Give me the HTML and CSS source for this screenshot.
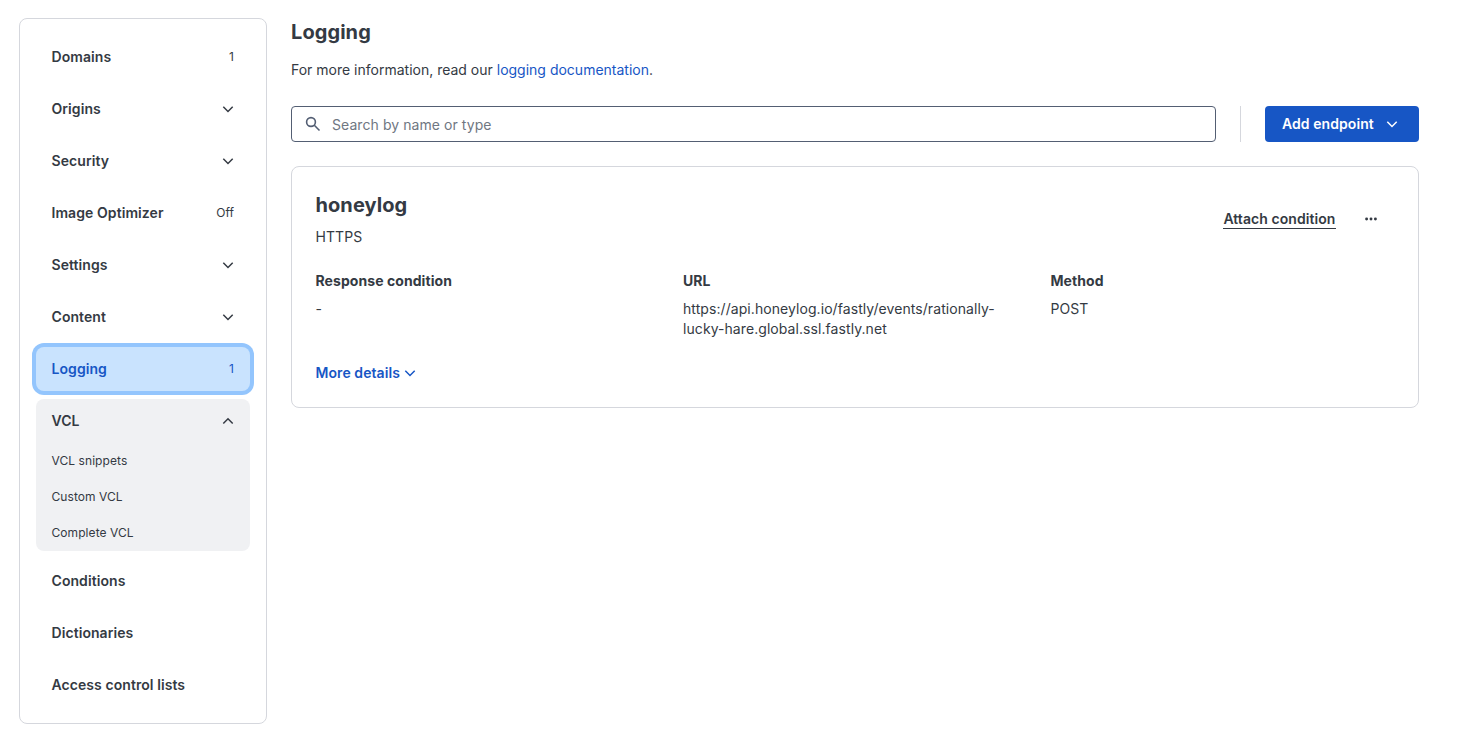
FILE: index.html
```html
<!DOCTYPE html>
<html lang="en">
<head>
    <meta charset="utf-8">
    <title>Logging</title>
    <link rel="stylesheet" href="styles.css">
</head>
<body>
    <div class="layout">
        <nav class="sidebar">
            <a class="nav-item">Domains <span class="badge">1</span></a>
            <a class="nav-item">Origins <svg class="chevron" viewBox="0 0 12 12"><path d="M1.3 3.8 6 8.5l4.7-4.7"/></svg></a>
            <a class="nav-item">Security <svg class="chevron" viewBox="0 0 12 12"><path d="M1.3 3.8 6 8.5l4.7-4.7"/></svg></a>
            <a class="nav-item">Image Optimizer <span class="badge">Off</span></a>
            <a class="nav-item">Settings <svg class="chevron" viewBox="0 0 12 12"><path d="M1.3 3.8 6 8.5l4.7-4.7"/></svg></a>
            <a class="nav-item">Content <svg class="chevron" viewBox="0 0 12 12"><path d="M1.3 3.8 6 8.5l4.7-4.7"/></svg></a>
            <a class="nav-item active">Logging <span class="badge">1</span></a>
            <div class="nav-group">
                <a class="nav-item">VCL <svg class="chevron" viewBox="0 0 12 12"><path d="M1.3 8.5 6 3.8l4.7 4.7"/></svg></a>
                <a class="nav-sub">VCL snippets</a>
                <a class="nav-sub">Custom VCL</a>
                <a class="nav-sub">Complete VCL</a>
            </div>
            <a class="nav-item">Conditions</a>
            <a class="nav-item">Dictionaries</a>
            <a class="nav-item">Access control lists</a>
        </nav>

        <main class="content">
            <h1>Logging</h1>
            <p class="intro">For more information, read our <a class="link">logging documentation</a>.</p>

            <div class="toolbar">
                <div class="search">
                    <svg class="search-icon" viewBox="0 0 16 16"><circle cx="6" cy="6" r="4.4"/><path d="m9.3 9.3 5.2 5.2"/></svg>
                    <input type="text" placeholder="Search by name or type">
                </div>
                <div class="divider"></div>
                <button class="add-button">Add endpoint <svg class="chevron" viewBox="0 0 12 12"><path d="M1.3 3.8 6 8.5l4.7-4.7"/></svg></button>
            </div>

            <section class="card">
                <div class="card-header">
                    <div>
                        <h2>honeylog</h2>
                        <p class="type">HTTPS</p>
                    </div>
                    <div class="actions">
                        <a class="attach">Attach condition</a>
                        <svg class="dots" viewBox="0 0 12 4"><circle cx="1.6" cy="2" r="1.45"/><circle cx="6" cy="2" r="1.45"/><circle cx="10.4" cy="2" r="1.45"/></svg>
                    </div>
                </div>
                <dl class="details">
                    <div>
                        <dt>Response condition</dt>
                        <dd>-</dd>
                    </div>
                    <div>
                        <dt>URL</dt>
                        <dd>https://api.honeylog.io/fastly/events/rationally-lucky-hare.global.ssl.fastly.net</dd>
                    </div>
                    <div>
                        <dt>Method</dt>
                        <dd>POST</dd>
                    </div>
                </dl>
                <a class="more">More details <svg class="chevron" viewBox="0 0 12 12"><path d="M1.3 3.8 6 8.5l4.7-4.7"/></svg></a>
            </section>
        </main>
    </div>
</body>
</html>
```
FILE: styles.css
```css
* {
    box-sizing: border-box;
}
body {
    margin: 0;
    background: #fff;
    color: #343a43;
    font-family: Inter, sans-serif;
    font-size: 14px;
    line-height: 20px;
    letter-spacing: 0.07px;
}
h1, h2, p, dl, dd {
    margin: 0;
}
.layout {
    display: flex;
    align-items: flex-start;
    gap: 24px;
    padding: 18px 58px 0 19px;
}
.sidebar {
    width: 248px;
    flex-shrink: 0;
    display: flex;
    flex-direction: column;
    gap: 8px;
    padding: 16px;
    border: 1px solid #d5d7dd;
    border-radius: 8px;
}
.nav-item {
    display: flex;
    align-items: center;
    justify-content: space-between;
    height: 44px;
    padding: 0 16px 0 15.5px;
    border-radius: 8px;
    font-weight: 600;
}
.badge {
    font-size: 12px;
    font-weight: 400;
}
.active {
    background: #c9e3fe;
    color: #1756c5;
    box-shadow: 0 0 0 4px #93c5fd;
}
.nav-group {
    background: #f0f1f3;
    border-radius: 8px;
}
.nav-sub {
    display: flex;
    align-items: center;
    height: 36px;
    padding: 0 16px 0 15.5px;
    font-size: 12px;
}
.chevron {
    width: 12px;
    height: 12px;
    fill: none;
    stroke: currentColor;
    stroke-width: 1.5;
}
.content {
    flex: 1;
    min-width: 0;
}
h1, h2 {
    font-size: 20px;
    line-height: 28px;
    font-weight: 700;
}
.intro {
    margin-top: 14px;
    letter-spacing: 0;
}
.link {
    color: #1756c5;
}
.toolbar {
    display: flex;
    gap: 24px;
    margin-top: 26px;
}
.search {
    flex: 1;
    display: flex;
    align-items: center;
    height: 36px;
    padding: 0 13px;
    border: 1px solid #535e73;
    border-radius: 4px;
}
.search-icon {
    width: 16px;
    height: 16px;
    fill: none;
    stroke: #535e73;
    stroke-width: 1.6;
}
.search input {
    flex: 1;
    margin-left: 11px;
    padding: 2px 0 0;
    border: 0;
    outline: 0;
    font: inherit;
    letter-spacing: inherit;
}
.search input::placeholder {
    color: #6f7782;
}
.divider {
    width: 1px;
    background: #d5d7dd;
}
.add-button {
    display: flex;
    align-items: center;
    justify-content: space-between;
    width: 154px;
    height: 36px;
    padding: 0 21px 0 17px;
    border: 0;
    border-radius: 4px;
    background: #1756c5;
    color: #fff;
    font: inherit;
    font-weight: 600;
    letter-spacing: inherit;
}
.card {
    margin-top: 24px;
    height: 242px;
    padding: 24px 24px 24px 23.5px;
    border: 1px solid #d5d7dd;
    border-radius: 8px;
}
.card-header {
    display: flex;
    justify-content: space-between;
}
.type {
    margin-top: 8px;
}
.actions {
    display: flex;
    align-items: center;
    gap: 29.5px;
    padding-right: 17px;
}
.attach {
    border-bottom: 1px solid #343a43;
    font-weight: 600;
    line-height: 19px;
}
.dots {
    width: 12px;
    height: 4px;
    fill: #343a43;
}
.details {
    display: grid;
    grid-template-columns: repeat(3, 1fr);
    gap: 24px;
    margin-top: 24px;
}
.details dt {
    font-weight: 700;
}
.details dd {
    margin-top: 8px;
    overflow-wrap: anywhere;
}
.more {
    display: flex;
    align-items: center;
    gap: 4px;
    margin-top: 24px;
    color: #1756c5;
    font-weight: 600;
}
```
